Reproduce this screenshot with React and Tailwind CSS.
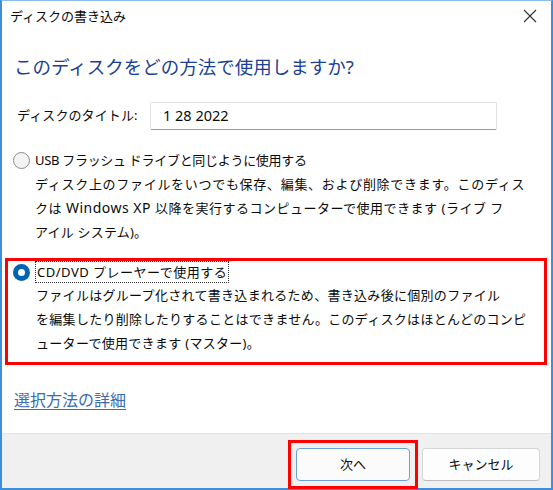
import React from "react";

const RadioOff = () => (
  <span className="w-[17px] h-[17px] shrink-0 rounded-full border border-[#8a8a8a] bg-[#f3f3f3]" />
);

const RadioOn = () => (
  <span className="w-[17px] h-[17px] shrink-0 rounded-full bg-[#0063b1] flex items-center justify-center">
    <span className="w-[7px] h-[7px] rounded-full bg-white" />
  </span>
);

export default function App() {
  return (
    <div className="w-[553px] h-[490px] flex flex-col bg-white border-x-2 border-b-2 border-t border-[#3b8ee0] border-t-[#8dbdea] text-[#0a0a0a] font-['Noto_Sans','Noto_Sans_CJK_JP',sans-serif]">
      {/* Title bar */}
      <div className="h-[31px] flex items-center justify-between pl-[8px] pr-[14px]">
        <span className="text-[13px] leading-none">ディスクの書き込み</span>
        <svg width="14" height="14" viewBox="0 0 14 14" className="mt-[-2px]">
          <path d="M1 1 L13 13 M13 1 L1 13" stroke="#333" strokeWidth="1.1" />
        </svg>
      </div>

      {/* Main instruction */}
      <h1 className="mt-[22px] pl-[12px] text-[18.5px] leading-[26px] text-[#1c3f94] whitespace-nowrap">
        このディスクをどの方法で使用しますか?
      </h1>

      {/* Disc title */}
      <div className="mt-[22px] flex items-center h-[28px]">
        <span className="pl-[15px] w-[148px] text-[13px] tracking-[0.1px]">ディスクのタイトル:</span>
        <div className="w-[347px] h-[28px] flex items-center pl-[12px] border border-[#e2e2e2] border-b-[#9a9a9a] rounded-[2px] text-[14.5px]">
          1 28 2022
        </div>
      </div>

      {/* Live file system option */}
      <div className="mt-[18px] pl-[11px] text-[13px] tracking-[0.2px] leading-[24px]">
        <div className="flex items-center gap-[5px]">
          <RadioOff />
          <span className="whitespace-nowrap tracking-[-0.3px]">USB フラッシュ ドライブと同じように使用する</span>
        </div>
        <p className="pl-[22px] whitespace-nowrap">
          <span className="tracking-[0.7px]">ディスク上のファイルをいつでも保存、編集、および削除できます。このディス</span>
          <br />
          <span className="tracking-[0.5px]">
            クは <span className="text-[14px]">Windows XP</span> 以降を実行するコンピューターで使用できます (ライブ フ
          </span>
          <br />
          アイル システム)。
        </p>
      </div>

      {/* Mastered option */}
      <div className="mt-[14px] ml-[3px] mr-[4px] border-[3px] border-[#ff0000] pl-[5px] pb-[7px] text-[13px] tracking-[0.3px] leading-[24px]">
        <div className="flex items-center gap-[5px]">
          <RadioOn />
          <span className="whitespace-nowrap border border-dotted border-[#333] leading-[20px] px-[1px] tracking-[0.5px]">
            CD/DVD プレーヤーで使用する
          </span>
        </div>
        <p className="pl-[23px] whitespace-nowrap">
          ファイルはグループ化されて書き込まれるため、書き込み後に個別のファイル
          <br />
          を編集したり削除したりすることはできません。このディスクはほとんどのコンピ
          <br />
          ューターで使用できます (マスター)。
        </p>
      </div>

      {/* Help link */}
      <a className="mt-[23px] ml-[12px] self-start text-[16px] leading-[24px] text-[#3b6cb0] underline underline-offset-[3px] cursor-pointer">
        選択方法の詳細
      </a>

      {/* Footer */}
      <div className="mt-auto h-[55px] bg-[#f0f0f0] border-t border-[#e3e3e3] flex justify-end items-start pt-[6px] pr-[11px] gap-[4px]">
        <div className="border-[3px] border-[#ff0000] p-[5px]">
          <button className="w-[114px] h-[33px] rounded-[4px] bg-[#fbfbfb] border border-[#6fa0d6] text-[13px] text-[#0a0a0a]">
            次へ
          </button>
        </div>
        <button className="mt-[8px] w-[118px] h-[33px] rounded-[4px] bg-[#fdfdfd] border border-[#d6d6d6] border-b-[#bdbdbd] text-[13px] text-[#0a0a0a]">
          キャンセル
        </button>
      </div>
    </div>
  );
}
